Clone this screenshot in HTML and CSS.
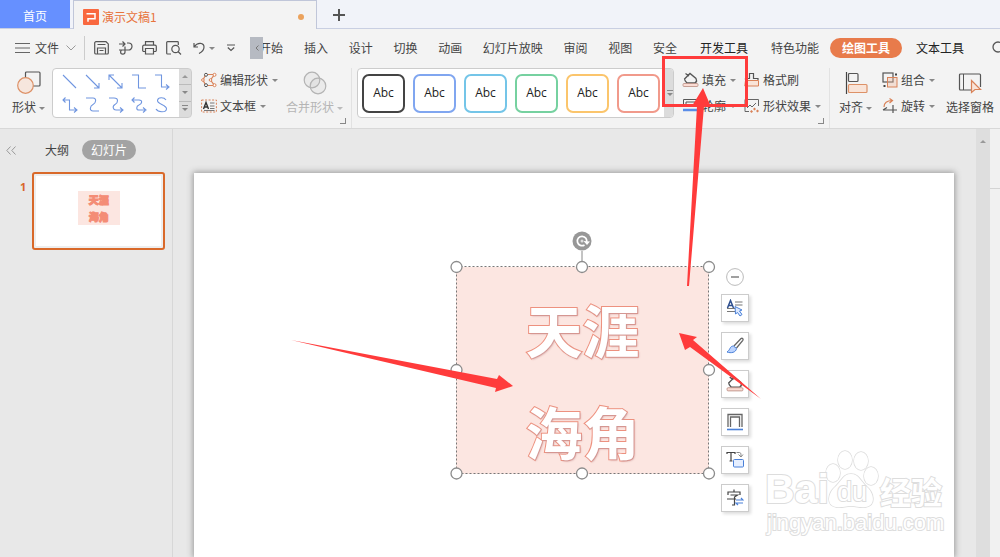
FILE: index.html
```html
<!DOCTYPE html>
<html lang="zh-CN">
<head>
<meta charset="utf-8">
<title>演示文稿1</title>
<link rel="stylesheet" href="styles.css">
</head>
<body>
<div class="app">
  <header class="tabs">
    <button class="tab-home">首页</button>
    <div class="tab-doc">
      <svg class="logo" width="16" height="16" viewBox="0 0 16 16"><rect width="16" height="16" rx="1" fill="#f9683f"/><path d="M3.500 4.700h8.500v5H5v3" fill="none" stroke="#fff" stroke-width="1.500"/></svg>
      <span class="doc-name">演示文稿1</span>
      <span class="dirty"></span>
    </div>
    <button class="tab-new" aria-label="新建"><svg width="12" height="12" viewBox="0 0 12 12"><path d="M6 0v12M0 6h12" stroke="#555" stroke-width="2"/></svg></button>
  </header>

  <div class="menubar">
    <button class="file">
      <svg width="15" height="10" viewBox="0 0 15 10"><path d="M0 .5h15M0 5h15M0 9.500h15" stroke="#666"/></svg>
      <span>文件</span>
      <svg class="chev" width="10" height="6" viewBox="0 0 10 6"><path d="M.5.5 5 5 9.500.5" fill="none" stroke="#999"/></svg>
    </button>
    <div class="quick">
      <button aria-label="保存"><svg width="15" height="14" viewBox="0 0 15 14"><path d="M2 .7h10l2.300 2.200V12a1 1 0 0 1-1 1H2a1.300 1.300 0 0 1-1.300-1V2A1.300 1.300 0 0 1 2 .7zM3.500 3.500h8M3.500 13V7h8v6M5.500 9.500h4"/></svg></button>
      <button aria-label="输出"><svg width="15" height="14" viewBox="0 0 15 14"><path d="M1 3h6M4.500.5 7 3 4.500 5.500M9 2h1.500a3.500 3.500 0 0 1 0 7H1M7 5.500V11a2.200 2.200 0 0 1-4.400 0c0-1 .8-2 2-2"/></svg></button>
      <button aria-label="打印"><svg width="15" height="14" viewBox="0 0 15 14"><path d="M3.500 4V.7h8V4M3.500 10.500H2A1.300 1.300 0 0 1 .7 9V5.500A1.300 1.300 0 0 1 2 4.200h11a1.300 1.300 0 0 1 1.300 1.300V9A1.300 1.300 0 0 1 13 10.500h-1.500M3.500 7.500h8V13h-8z"/></svg></button>
      <button aria-label="预览"><svg width="16" height="14" viewBox="0 0 16 14"><path d="M5 13H1.500a.8.8 0 0 1-.8-.8V1.500a.8.8 0 0 1 .8-.8h10a.8.8 0 0 1 .8.800V4M12 10.500l3 3"/><circle cx="9.500" cy="8" r="3.700"/></svg></button>
      <button class="undo" aria-label="撤销"><svg width="12" height="12" viewBox="0 0 12 12"><path d="M1 1v4h4M1 5C5-.5 11 1 11 5c0 3-2 5-5 6.500"/></svg><i class="caret"></i></button>
      <button class="more" aria-label="更多"><svg width="8" height="8" viewBox="0 0 8 8"><path d="M0 1h8M.8 3.500 4 6.500l3.200-3"/></svg></button>
    </div>
    <button class="nav-scroll" aria-label="向左"><svg width="4" height="6" viewBox="0 0 4 6"><path d="M3.500.5 1 3l2.500 2.500" fill="none" stroke="#777"/></svg></button>
    <nav class="nav">
      <a class="clipped" href="#"><span>开始</span></a>
      <div class="nav-main">
        <a href="#">插入</a><a href="#">设计</a><a href="#">切换</a><a href="#">动画</a><a href="#">幻灯片放映</a><a href="#">审阅</a><a href="#">视图</a><a href="#">安全</a>
      </div>
      <div class="nav-tools">
        <a class="dark" href="#">开发工具</a><a href="#">特色功能</a>
      </div>
      <a class="active" href="#">绘图工具</a>
      <a class="dark" href="#">文本工具</a>
      <svg class="search" width="12" height="14" viewBox="0 0 12 14"><circle cx="6" cy="6" r="5" fill="none" stroke="#555" stroke-width="1.300"/></svg>
    </nav>
  </div>

  <div class="ribbon">
    <button class="big shapes">
      <svg width="24" height="24" viewBox="0 0 24 24"><rect x="8.500" y="1" width="14.500" height="14" rx="1" fill="none" stroke="#555" stroke-width="1.200"/><circle cx="8.500" cy="14.500" r="7.800" fill="#f6e6dd" stroke="#dd9167" stroke-width="1.200"/></svg>
      <span>形状<i class="caret"></i></span>
    </button>
    <div class="gallery">
      <div class="lines">
        <svg viewBox="0 0 16 16"><path d="m1 1 13 13"/></svg>
        <svg viewBox="0 0 16 16"><path d="m1 1 13 13M14 9v5H9"/></svg>
        <svg viewBox="0 0 16 16"><path d="m1 1 13 13M14 9v5H9M1 6V1h5"/></svg>
        <svg viewBox="0 0 16 16"><path d="M1 1h6.500v13H15"/></svg>
        <svg viewBox="0 0 16 16"><path d="M1 1h6.500v12H15M12 10.500l3 2.500-3 2.500"/></svg>
        <svg viewBox="0 0 16 16"><path d="M1 3h6.500v10H15M12 10.500l3 2.500-3 2.500M3.500.5 1 3l2.500 2.500"/></svg>
        <svg viewBox="0 0 16 16"><path d="M1 1h7c4 0 3 5 0 6.500S4 14 8 14h6"/></svg>
        <svg viewBox="0 0 16 16"><path d="M1 1h5c5 0 4 5 1 6.500S5 13 8 13h7M12 10.500l3 2.500-3 2.500"/></svg>
        <svg viewBox="0 0 16 16"><path d="M1 3h7c4 0 3 4 0 5s-3 5 0 5h6M12 10.500l3 2.500-3 2.500M3.500.5 1 3l2.500 2.500"/></svg>
        <svg viewBox="0 0 16 16"><path d="M12 3C10 0 4 0 3.500 3.500S13 8 12.500 12 4 15.500 2 12"/></svg>
      </div>
      <div class="steps"><button aria-label="上"><i class="caret up"></i></button><button aria-label="下"><i class="caret"></i></button><button aria-label="全部"><i class="caret bar"></i></button></div>
    </div>
    <div class="stack edit">
      <button><svg width="16" height="16" viewBox="0 0 16 16"><g fill="none" stroke="#d98258" stroke-width="1.200"><path d="M4.500 3 2 8l2.500 5M5 2.500h8.500L9.500 8l4 5.500H5"/></g><g fill="#fff" stroke="#555"><circle cx="5" cy="2.800" r="1.500"/><circle cx="5" cy="13.200" r="1.500"/></g><g fill="#fff" stroke="#d98258"><circle cx="1.900" cy="8" r="1.300"/><circle cx="13.500" cy="2.800" r="1.500"/><circle cx="13.500" cy="13.200" r="1.500"/><circle cx="9.500" cy="8" r="1.300"/></g></svg>编辑形状<i class="caret"></i></button>
      <button><svg width="16" height="16" viewBox="0 0 16 16"><rect x=".6" y="2" width="14.800" height="12" fill="none" stroke="#d98258" stroke-dasharray="2 1.500"/><path d="M2.500 11 5 4.500 7.500 11M3.500 9h3" fill="none" stroke="#333" stroke-width="1.400"/><path d="M9 5h4.500M9 8h4.500M3 12.500h10.500M9 10.500h4.500" stroke="#777"/></svg>文本框<i class="caret"></i></button>
    </div>
    <button class="big merge" disabled>
      <svg width="24" height="24" viewBox="0 0 24 24"><g fill="#b0b0b0" fill-opacity=".12" stroke="#b3b3b3" stroke-width="1.200"><circle cx="9" cy="9" r="7.800"/><circle cx="15" cy="15" r="7.800"/></g></svg>
      <span>合并形状<i class="caret"></i></span>
    </button>
    <i class="launcher"></i>
    <div class="styles">
      <button class="sw black">Abc</button><button class="sw blue">Abc</button><button class="sw cyan">Abc</button><button class="sw green">Abc</button><button class="sw gold">Abc</button><button class="sw red">Abc</button>
      <button class="styles-more" aria-label="更多样式"><i class="caret bar"></i></button>
    </div>
    <div class="stack fill">
      <button><svg width="17" height="16" viewBox="0 0 17 16"><use href="#bucket"/></svg>填充<i class="caret"></i></button>
      <button><svg width="17" height="16" viewBox="0 0 17 16"><path d="M1.500 9V1.500h14V9M4 9V4h9v5" fill="none" stroke="#555"/><path d="M1 12h15" stroke="#5a8de8" stroke-width="2.500"/></svg>轮廓<i class="caret"></i></button>
    </div>
    <div class="stack effect">
      <button><svg width="16" height="16" viewBox="0 0 16 16"><path d="M1.500 8V6.500h4V1.500h4v5h4.500V8" fill="none" stroke="#555" stroke-width="1.200"/><path d="M1.500 8.500h13V14H.8l.7-5.500z" fill="#f9e4d8" stroke="#d98258"/></svg>格式刷</button>
      <button><svg width="16" height="16" viewBox="0 0 16 16"><path d="M5 13.500H1V1.500h13.500V8M3 10l3-3 2 2 4-4" fill="none" stroke="#666"/><path d="m9 11 1.500-1.500L12 11l-1.500 1.500zM12 13l1.500-1.500L15 13l-1.500 1.500zM6 13.500 7.500 12 9 13.500 7.500 15z" fill="#d98258"/></svg>形状效果<i class="caret"></i></button>
    </div>
    <i class="launcher"></i>
    <button class="big align">
      <svg width="24" height="24" viewBox="0 0 24 24"><path d="M2.500 1v22" stroke="#444" stroke-width="1.200"/><rect x="4.500" y="2.500" width="9.500" height="8" rx="1" fill="none" stroke="#555" stroke-width="1.200"/><rect x="4.500" y="13.500" width="18.500" height="8" rx="1" fill="#f9e4d8" stroke="#dd9167" stroke-width="1.200"/></svg>
      <span>对齐<i class="caret"></i></span>
    </button>
    <div class="stack group">
      <button><svg width="16" height="16" viewBox="0 0 16 16"><rect x="1" y="1" width="10" height="9" fill="none" stroke="#555" stroke-width="1.200"/><rect x="5.500" y="5.500" width="9.500" height="9.500" fill="#f2b89a" fill-opacity=".35" stroke="#d98258"/><path d="M13 1.500h2v2h-2zM1.500 13h2v2h-2z" fill="#444"/></svg>组合<i class="caret"></i></button>
      <button><svg width="16" height="16" viewBox="0 0 16 16"><path d="M2 9c0-4 3-6.500 8-6.500M7.500.5l3 2-3 2.500" fill="none" stroke="#d98258" stroke-width="1.200"/><path d="M1 12h14M11 7v8M1 12l4-2.500" fill="none" stroke="#555" stroke-width="1.200"/></svg>旋转<i class="caret"></i></button>
    </div>
    <button class="big pane">
      <svg width="24" height="24" viewBox="0 0 24 24"><path d="M13 19H2.500a1 1 0 0 1-1-1V4a1 1 0 0 1 1-1h19a1 1 0 0 1 1 1v12" fill="none" stroke="#555" stroke-width="1.200"/><path d="M5.500 3v16" stroke="#555"/><path d="M13.500 9.500v12l3.500-3h5.500z" fill="#f9e4d8" stroke="#d98258" stroke-width="1.200"/></svg>
      <span>选择窗格</span>
    </button>
  </div>

  <main class="work">
    <aside class="side">
      <div class="side-head">
        <button class="collapse" aria-label="折叠"><svg width="11" height="9" viewBox="0 0 11 9"><path d="M4.500.5.800 4.500l3.700 4M9.500.5 5.800 4.500l3.700 4" fill="none" stroke="#999"/></svg></button>
        <button class="outline">大纲</button>
        <button class="slides">幻灯片</button>
      </div>
      <div class="thumb-row">
        <b>1</b>
        <div class="thumb"><div class="mini"><span>天涯</span><span>海角</span></div></div>
      </div>
    </aside>
    <section class="stage">
      <div class="slide">
        <div class="shape"><span>天涯</span><span>海角</span></div>
        <svg class="handles" width="280" height="250" viewBox="0 0 280 250">
          <path d="M140 21v15" stroke="#888"/>
          <circle cx="140" cy="11" r="9.500" fill="#979797"/>
          <path d="M144.500 12.500a4.700 4.700 0 1 0-2 2.500" fill="none" stroke="#fff" stroke-width="1.700"/><path d="m141.500 11 6.500.5-3 3.500z" fill="#fff"/><circle cx="140" cy="11" r="1.500" fill="#ddd"/>
          <rect x="14.500" y="36.500" width="252" height="207" fill="none" stroke="#777" stroke-dasharray="2 2"/>
          <g fill="#fff" stroke="#8c8c8c" stroke-width="1.300"><circle cx="14.500" cy="37" r="5.500"/><circle cx="140" cy="37" r="5.500"/><circle cx="267" cy="37" r="5.500"/><circle cx="14.500" cy="140" r="5.500"/><circle cx="267" cy="140" r="5.500"/><circle cx="14.500" cy="243.500" r="5.500"/><circle cx="140" cy="243.500" r="5.500"/><circle cx="267" cy="243.500" r="5.500"/></g>
        </svg>
        <div class="float">
          <button class="minus" aria-label="收起"><svg width="18" height="18" viewBox="0 0 18 18"><circle cx="9" cy="9" r="8.400" fill="#fff" stroke="#bbb"/><path d="M5 9h8" stroke="#888" stroke-width="1.600"/></svg></button>
          <button aria-label="样式"><svg width="18" height="18" viewBox="0 0 18 18"><path d="M1.500 9 4.500 1.500 7.500 9M2.500 6.500h4" fill="none" stroke="#2e4f8f" stroke-width="1.500"/><path d="M9 3h7.500M9 6h7.500M1 9.500h9M1 12.500h8" stroke="#777" stroke-width="1.200"/><path d="m9 7.500.5 7.500 2-1.500 2.500 3.500 2-1.500-2.500-3.500 2.500-1z" fill="#dce9ff" stroke="#4a80d8"/></svg></button>
          <button aria-label="画笔"><svg width="18" height="18" viewBox="0 0 18 18"><path d="M8 9 15 1.500c1.500-.8 2.500.5 1.800 1.800L10.500 11" fill="#fff" stroke="#666" stroke-width="1.300"/><path d="M7.500 9c-4 0-3 4-6.500 6 4 1.500 9 .5 9.500-3.500z" fill="#bcd4ff" stroke="#4a80d8"/></svg></button>
          <button aria-label="填充颜色"><svg width="18" height="18" viewBox="0 0 17 16"><use href="#bucket"/></svg></button>
          <button aria-label="轮廓颜色"><svg width="18" height="18" viewBox="0 0 18 18"><path d="M2 14V1.500h14V14M4.500 14V4h9v10" fill="none" stroke="#666" stroke-width="1.300"/><path d="M1 16.500h16" stroke="#4a80d8" stroke-width="1.600"/></svg></button>
          <button aria-label="文字方向"><svg width="18" height="18" viewBox="0 0 18 18"><path d="M1 3V1.500h8V3M5 1.500V10M3.500 10h3" fill="none" stroke="#444" stroke-width="1.200"/><path d="M10.500 1.500h3c1 0 1.500.5 1.500 3.500M12.500 3.500 15 6l2-2.500" fill="none" stroke="#888"/><rect x="7.500" y="8.500" width="10" height="7.500" rx="1" fill="#e6efff" stroke="#4a80d8"/></svg></button>
          <button aria-label="替换字体"><svg width="18" height="18" viewBox="0 0 18 18"><path d="M8 .5V3M2 6V3h12v3M4.500 6h7L8.500 8v8H6M1 10h9" fill="none" stroke="#444" stroke-width="1.200"/><path d="M10 11h7l-2-2M17 14h-7l2 2" fill="none" stroke="#4a80d8" stroke-width="1.200"/></svg></button>
        </div>
        <div class="mark">
          <svg width="180" height="58" viewBox="0 0 180 58"><g fill="#fff" stroke="#dcdcdc" stroke-width="1.500"><ellipse cx="68" cy="23" rx="7" ry="9"/><ellipse cx="80" cy="10" rx="7" ry="9"/><ellipse cx="96" cy="11" rx="7" ry="9"/><ellipse cx="106" cy="26" rx="7" ry="9"/><path d="M86 24c8 0 10 8 16 13s10 18-1 20c-6 1-9-1-15-1s-9 2-15 1c-11-2-7-15-1-20s8-13 16-13z"/></g></svg>
          <span class="bai">Bai</span><span class="du">du</span><span class="jy">经验</span><span class="url">jingyan.baidu.com</span>
        </div>
      </div>
    </section>
    <div class="scroll"><i class="caret up"></i></div>
    <div class="task-pane"></div>
  </main>

  <svg class="notes" width="1000" height="557" viewBox="0 0 1000 557">
    <rect x="663.500" y="57.500" width="83" height="48" fill="none" stroke="#ff3b3b" stroke-width="3"/>
    <g fill="#ff3b3b"><path d="m687 286 10-180h-5l11-18 8 19-7-1-15 180z"/><path d="m291 340 206 39 2-4 14 11-18 6 1-4z"/><path d="m761 399-71-52-5 3-6-17 18 4-4 3z"/></g>
  </svg>
  <svg class="defs" width="0" height="0"><defs><g id="bucket"><path d="M3.500 1.500 7 4M2.500 7 8 1.500l6 5c1 2 .5 3 0 4M2.500 6.500c0 2 1 3 2.500 4.500h8l2-2.500" fill="none" stroke="#555" stroke-width="1.300"/><rect x="1" y="11.500" width="15" height="3" rx="1" fill="#fbdcd4" stroke="#b98d82" stroke-width=".8"/></g></defs></svg>
</div>
</body>
</html>
```
FILE: styles.css
```css
* { box-sizing: border-box; }
body { margin: 0; overflow: hidden; font: 12px/16px "Noto Sans CJK SC", sans-serif; color: #444; }
button { border: 0; padding: 0; background: none; font: inherit; color: inherit; }
a { color: inherit; text-decoration: none; }
svg { display: block; flex: none; }
.app { position: relative; display: flex; flex-direction: column; height: 100vh; overflow: hidden; background: #f3f3f3; }

.tabs { display: flex; height: 29px; flex: none; background: #f1f3f9; border-bottom: 1px solid #c9cfe2; }
.tab-home { width: 70px; padding-top: 3px; background: #6690ff; color: #fff; }
.tab-doc { display: flex; align-items: center; width: 244px; margin: 0 0 -1px 3px; padding: 3px 12px 0 9px; gap: 3px; background: #f3f3f3; border: 1px solid #c0c6d9; border-bottom: 0; }
.doc-name { flex: 1; color: #e8743c; }
.dirty { width: 6px; height: 6px; border-radius: 50%; background: #eba25c; }
.tab-new { margin: 2px 0 0 16px; }

.menubar { display: flex; align-items: center; flex: none; height: 38px; white-space: nowrap; }
.file { display: flex; align-items: center; gap: 5px; height: 24px; padding: 0 8px 0 15px; border-right: 1px solid #ccc; }
.chev { margin-left: 2px; }
.quick { display: flex; align-items: center; gap: 9px; width: 165px; padding-left: 9px; }
.quick svg { fill: none; stroke: #555; stroke-width: 1.2; }
.undo { display: flex; align-items: center; margin-left: 2px; }
.more { margin-left: 3px; }
.nav-scroll { display: grid; place-items: center; flex: none; width: 13px; height: 22px; background: #b6bac2; }
.nav { display: flex; align-items: center; flex: 1; min-width: 0; }
.nav > * { flex: none; }
.clipped { display: flex; justify-content: flex-end; width: 20px; overflow: hidden; }
.nav-main { display: flex; justify-content: space-between; width: 373px; margin-left: 21px; }
.nav-tools { display: flex; gap: 23px; margin: 0 11px 0 23px; }
.dark { color: #222; }
.active { padding: 2px 12px; margin-right: 14px; border-radius: 10px; background: #e87b4b; color: #fff; font-weight: 700; }
.search { margin-left: 28px; }

.caret { display: inline-block; flex: none; margin-left: 4px; border: 3px solid transparent; border-top-color: #888; border-bottom: 0; vertical-align: middle; }
.caret.up { border-top: 0; border-bottom: 3px solid #999; }
.caret.bar { position: relative; }
.caret.bar::before { content: ""; position: absolute; left: -3px; top: -6px; width: 6px; height: 1px; background: #888; }

.ribbon { display: flex; flex: none; height: 62px; padding-top: 1px; border-bottom: 1px solid #d8d8d8; white-space: nowrap; }
.big { display: flex; flex-direction: column; align-items: center; gap: 2px; flex: none; height: 50px; padding-top: 3px; }
.big span { line-height: 20px; }
.big .caret { margin-left: 3px; }
.shapes { width: 33px; margin-left: 12px; }
.gallery { display: flex; width: 140px; height: 50px; margin-left: 7px; flex: none; background: #fff; border: 1px solid #ccc; border-radius: 4px; overflow: hidden; }
.lines { display: grid; grid-template-columns: repeat(5, 16px); align-content: center; justify-content: center; gap: 7px; flex: 1; }
.lines svg { width: 16px; height: 16px; fill: none; stroke: #7096e0; stroke-width: 1.1; }
.steps { display: grid; width: 12px; grid-template-rows: repeat(3, 1fr); gap: 1px; background: #bbb; }
.steps button { display: grid; place-items: center; background: #dcdcdc; }
.steps .caret, .styles-more .caret { margin: 0; }
.stack { display: flex; flex-direction: column; flex: none; gap: 2px; }
.stack button { display: flex; align-items: center; gap: 3px; height: 24px; }
.stack .caret { margin-left: 1px; }
.edit { margin-left: 9px; }
.merge { margin-left: 8px; color: #b5b5b5; }
.merge .caret { border-top-color: #bbb; }
.launcher { position: relative; width: 9px; height: 60px; flex: none; border-right: 1px solid #e2e2e2; }
.launcher::after { content: ""; position: absolute; right: 5px; bottom: 4px; width: 5px; height: 5px; border: solid #888; border-width: 0 1px 1px 0; }
.styles { display: flex; gap: 8px; align-items: center; width: 317px; height: 50px; margin-left: 5px; padding-left: 4px; flex: none; background: #fff; border: 1px solid #ccc; border-radius: 4px; overflow: hidden; }
.sw { flex: none; width: 43px; height: 39px; border: 2px solid; border-radius: 7px; background: #fff; font: 12px/16px "Open Sans", sans-serif; color: #222; }
.black { border-color: #444; } .blue { border-color: #80a6f0; } .cyan { border-color: #74c5e8; }
.green { border-color: #76d1a0; } .gold { border-color: #fbc56c; } .red { border-color: #f19a8b; }
.styles-more { align-self: stretch; flex: none; width: 12px; margin-left: -4px; background: #dcdcdc; }
.fill { margin-left: 8px; }
.effect { margin-left: 8px; }
.align { margin-left: 9px; }
.group { margin-left: 10px; }
.pane { margin-left: 11px; }

.work { display: flex; flex: 1; min-height: 0; background: #e8e8e8; }
.side { width: 173px; flex: none; border-right: 1px solid #d7d7d7; }
.side-head { display: flex; align-items: center; padding: 11px 0 0 6px; }
.outline { margin: 0 13px 0 28px; }
.slides { padding: 2px 9px; border-radius: 10px; background: #a3a3a3; color: #fff; }
.thumb-row { display: flex; gap: 6px; margin: 12px 0 0 20px; }
.thumb-row b { padding-top: 7px; font: 700 11px/16px "Noto Sans", sans-serif; color: #d9662a; }
.thumb { display: grid; place-items: center; width: 133px; height: 78px; padding-bottom: 6px; border: 2px solid #d9692a; border-radius: 3px; background: #fff; box-shadow: inset 0 0 0 2px #eee; }
.mini { display: flex; flex-direction: column; justify-content: center; width: 42px; height: 34px; background: #fce6e1; color: #f48c76; font-weight: 900; font-size: 10px; line-height: 17px; text-align: center; -webkit-text-stroke: 1px #f48c76; }
.stage { position: relative; flex: 1; min-width: 0; padding: 44px 22px 0 21px; overflow: hidden; }
.slide { position: relative; height: 100%; background: #fff; box-shadow: 0 0 6px 1px #999; }
.shape { position: absolute; left: 262px; top: 94px; width: 253px; height: 207px; padding-top: 10px; background: #fce6e1; color: #fff; font-weight: 700; font-size: 57px; line-height: 102px; text-align: center; -webkit-text-stroke: 2px #ef917e; paint-order: stroke fill; text-shadow: 1px 1px 2px #c99; }
.shape span, .mini span { display: block; }
.handles { position: absolute; left: 248px; top: 57px; }
.float { position: absolute; left: 527px; top: 95px; display: flex; flex-direction: column; gap: 10px; }
.float button { display: grid; place-items: center; width: 28px; height: 28px; background: #fff; border: 1px solid #ccc; box-shadow: 2px 2px 3px #ddd; }
.float .minus { height: 16px; border: 0; box-shadow: none; background: none; }
.mark { position: absolute; right: 4px; bottom: 21px; width: 185px; height: 86px; color: #fff; -webkit-text-stroke: 2px #ddd; paint-order: stroke fill; font-family: "Liberation Sans", sans-serif; }
.mark span { position: absolute; }
.mark .bai { left: 0; top: 20px; font-size: 41px; line-height: 38px; font-weight: 700; }
.mark .du { left: 72px; top: 26px; font-size: 27px; line-height: 32px; font-weight: 400; }
.mark .jy { left: 115px; top: 24px; font: 700 31px/34px "Noto Sans CJK SC", sans-serif; }
.mark .url { left: 2px; top: 61px; font-size: 22px; line-height: 24px; }
.scroll { width: 14px; flex: none; padding-top: 7px; background: #dedede; }
.scroll .caret { display: block; width: 6px; margin: 4px auto; }
.task-pane { width: 10px; flex: none; height: 100%; background: linear-gradient(#d4d4d4, #d4d4d4) 0 59px / 100% 1px no-repeat #f1f1f1; }
.notes { position: absolute; left: 0; top: 0; pointer-events: none; }
.defs { position: absolute; }
```
